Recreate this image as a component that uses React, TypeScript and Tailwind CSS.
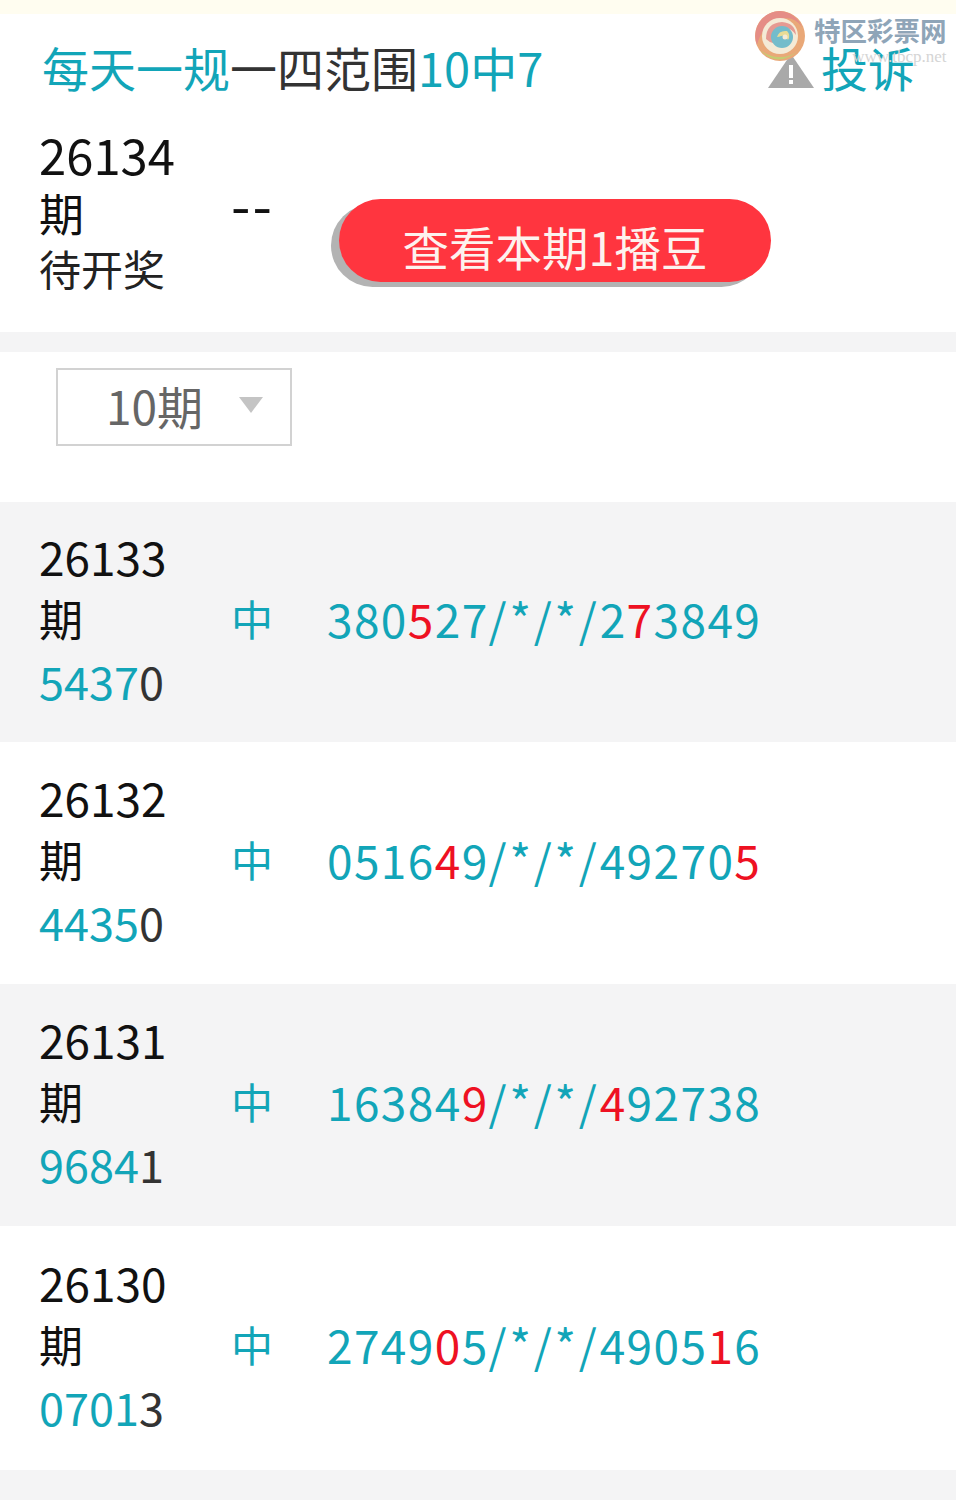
const font = "[font-family:'Noto_Sans_CJK_SC','Noto_Sans',sans-serif]";

type Part = { text: string; red?: boolean };

type Row = {
  issue: string;
  openBlue: string;
  openRest: string;
  parts: Part[];
  gray: boolean;
  heightClass: string;
};

const rows: Row[] = [
  {
    issue: "26133",
    openBlue: "5437",
    openRest: "0",
    gray: true,
    heightClass: "h-[240px]",
    parts: [
      { text: "380" },
      { text: "5", red: true },
      { text: "27" },
      { text: "/*/*/" },
      { text: "2" },
      { text: "7", red: true },
      { text: "3849" },
    ],
  },
  {
    issue: "26132",
    openBlue: "4435",
    openRest: "0",
    gray: false,
    heightClass: "h-[242px]",
    parts: [
      { text: "0516" },
      { text: "4", red: true },
      { text: "9" },
      { text: "/*/*/" },
      { text: "49270" },
      { text: "5", red: true },
    ],
  },
  {
    issue: "26131",
    openBlue: "9684",
    openRest: "1",
    gray: true,
    heightClass: "h-[242px]",
    parts: [
      { text: "16384" },
      { text: "9", red: true },
      { text: "/*/*/" },
      { text: "4", red: true },
      { text: "92738" },
    ],
  },
  {
    issue: "26130",
    openBlue: "0701",
    openRest: "3",
    gray: false,
    heightClass: "h-[244px]",
    parts: [
      { text: "2749" },
      { text: "0", red: true },
      { text: "5" },
      { text: "/*/*/" },
      { text: "4905" },
      { text: "1", red: true },
      { text: "6" },
    ],
  },
];

function RecordRow({ row }: { row: Row }) {
  return (
    <div className={`flex items-center pb-[8px] pl-[39px] ${row.heightClass} ${row.gray ? "bg-[#f4f4f5]" : "bg-white"}`}>
      <div className="w-[192px] shrink-0">
        <div className="h-[62px] text-[46px] leading-[62px] text-[#111]">{row.issue}</div>
        <div className="h-[62px] text-[44px] leading-[62px] text-[#111]">期</div>
        <div className="h-[62px] pt-[1px] text-[45px] leading-[62px] text-[#333]">
          <span className="text-[#12a5b8]">{row.openBlue}</span>
          {row.openRest}
        </div>
      </div>
      <div className="w-[96px] shrink-0 text-[42px] leading-[62px] text-[#12a5b8]">中</div>
      <div className="whitespace-nowrap text-[46px] leading-[62px] tracking-[1.4px] text-[#12a5b8]">
        {row.parts.map((part, i) => (
          <span
            key={i}
            className={part.red ? "text-[#ee1122]" : part.text === "/*/*/" ? "tracking-[2.8px]" : ""}
          >
            {part.text}
          </span>
        ))}
      </div>
    </div>
  );
}

function Logo() {
  return (
    <svg width="52" height="54" viewBox="0 0 52 54" className="shrink-0">
      <circle cx="26" cy="27" r="25" fill="#e9a878" />
      <path d="M26 2 A25 25 0 0 0 3 36 Q8 16 28 10 Q40 7 48 18 A25 25 0 0 0 26 2Z" fill="#e58d86" />
      <path d="M6 41 Q24 60 45 41 Q36 49 24 48 Q14 47 6 41Z" fill="#c5cc72" />
      <circle cx="26" cy="27" r="18" fill="#f4ead6" />
      <path d="M12 30 Q12 14 28 13 Q41 14 42 26 Q36 17 27 19 Q17 22 19 34 Q15 33 12 30Z" fill="#e59a92" />
      <circle cx="28" cy="28" r="11" fill="#74bccb" />
      <path d="M23 28 Q25 21 33 22 Q37 26 34 31 Q31 26 27 27 Q25 28 23 28Z" fill="#e8dc96" />
      <circle cx="31" cy="28" r="2.5" fill="#f4ead6" />
    </svg>
  );
}

export default function App() {
  return (
    <div className={`relative h-[1500px] w-[956px] overflow-hidden bg-[#f4f4f5] ${font}`}>
      <div className="h-[14px] bg-[#fffdf0]" />

      <section className="h-[318px] bg-white">
        <div className="flex h-[112px] items-center justify-between pb-[6px] pl-[42px] pr-[41px]">
          <h1 className="text-[47px] font-normal leading-[60px] text-[#12a5b8]">
            每天一规<span className="text-[#333]">一四范围</span>10中7
          </h1>
          <div className="flex items-center gap-[6px] text-[47px] leading-[60px] text-[#12a5b8]">
            <svg width="48" height="36" viewBox="0 0 48 36" className="mt-[8px]">
              <path d="M24 1 L47 35 H1 Z" fill="#a9a9a9" />
              <rect x="22" y="12" width="4" height="13" fill="#fff" />
              <rect x="22" y="27" width="4" height="4" fill="#fff" />
            </svg>
            <span>投诉</span>
          </div>
        </div>

        <div className="flex pl-[39px]">
          <div className="w-[192px] shrink-0">
            <div className="h-[56px] text-[49px] leading-[56px] text-[#111]">26134</div>
            <div className="h-[58px] pt-[2px] text-[45px] leading-[58px] text-[#111]">期</div>
            <div className="h-[52px] pt-[2px] text-[42px] leading-[52px] text-[#222]">待开奖</div>
          </div>
          <div className="w-[108px] shrink-0 pt-[52px] text-[56px] leading-[50px] tracking-[2px] text-[#111]">--</div>
          <button className="mt-[73px] h-[83px] w-[432px] rounded-full bg-[#ff353f] pt-[10px] text-[46.5px] leading-[66px] text-[#fdf2ee] shadow-[-8px_5px_0_#b3b3b3]">
            查看本期1播豆
          </button>
        </div>
      </section>

      <div className="h-[20px]" />

      <section className="h-[150px] bg-white pl-[56px] pt-[16px]">
        <div className="flex h-[78px] w-[236px] items-center border-2 border-[#d2d2d2] pb-[5px] pl-[48px]">
          <span className="w-[132px] text-[46px] leading-[60px] text-[#666]">10期</span>
          <svg width="26" height="18" viewBox="0 0 26 18">
            <path d="M1 1 H25 L13 17 Z" fill="#c4c4c4" />
          </svg>
        </div>
      </section>

      {rows.map((row) => (
        <RecordRow key={row.issue} row={row} />
      ))}

      {/* site watermark sits over the header */}
      <div className="absolute left-[754px] top-[9px] flex items-start gap-[8px]">
        <Logo />
        <div className="pt-[3px]">
          <div className="whitespace-nowrap text-[26.5px] font-bold leading-[36px] text-[#8fa5b8]">特区彩票网</div>
          <div className="whitespace-nowrap text-right text-[17px] leading-[18px] text-[#d5d5d5] [font-family:'Liberation_Serif',serif]">
            www.tbcp.net
          </div>
        </div>
      </div>
    </div>
  );
}
